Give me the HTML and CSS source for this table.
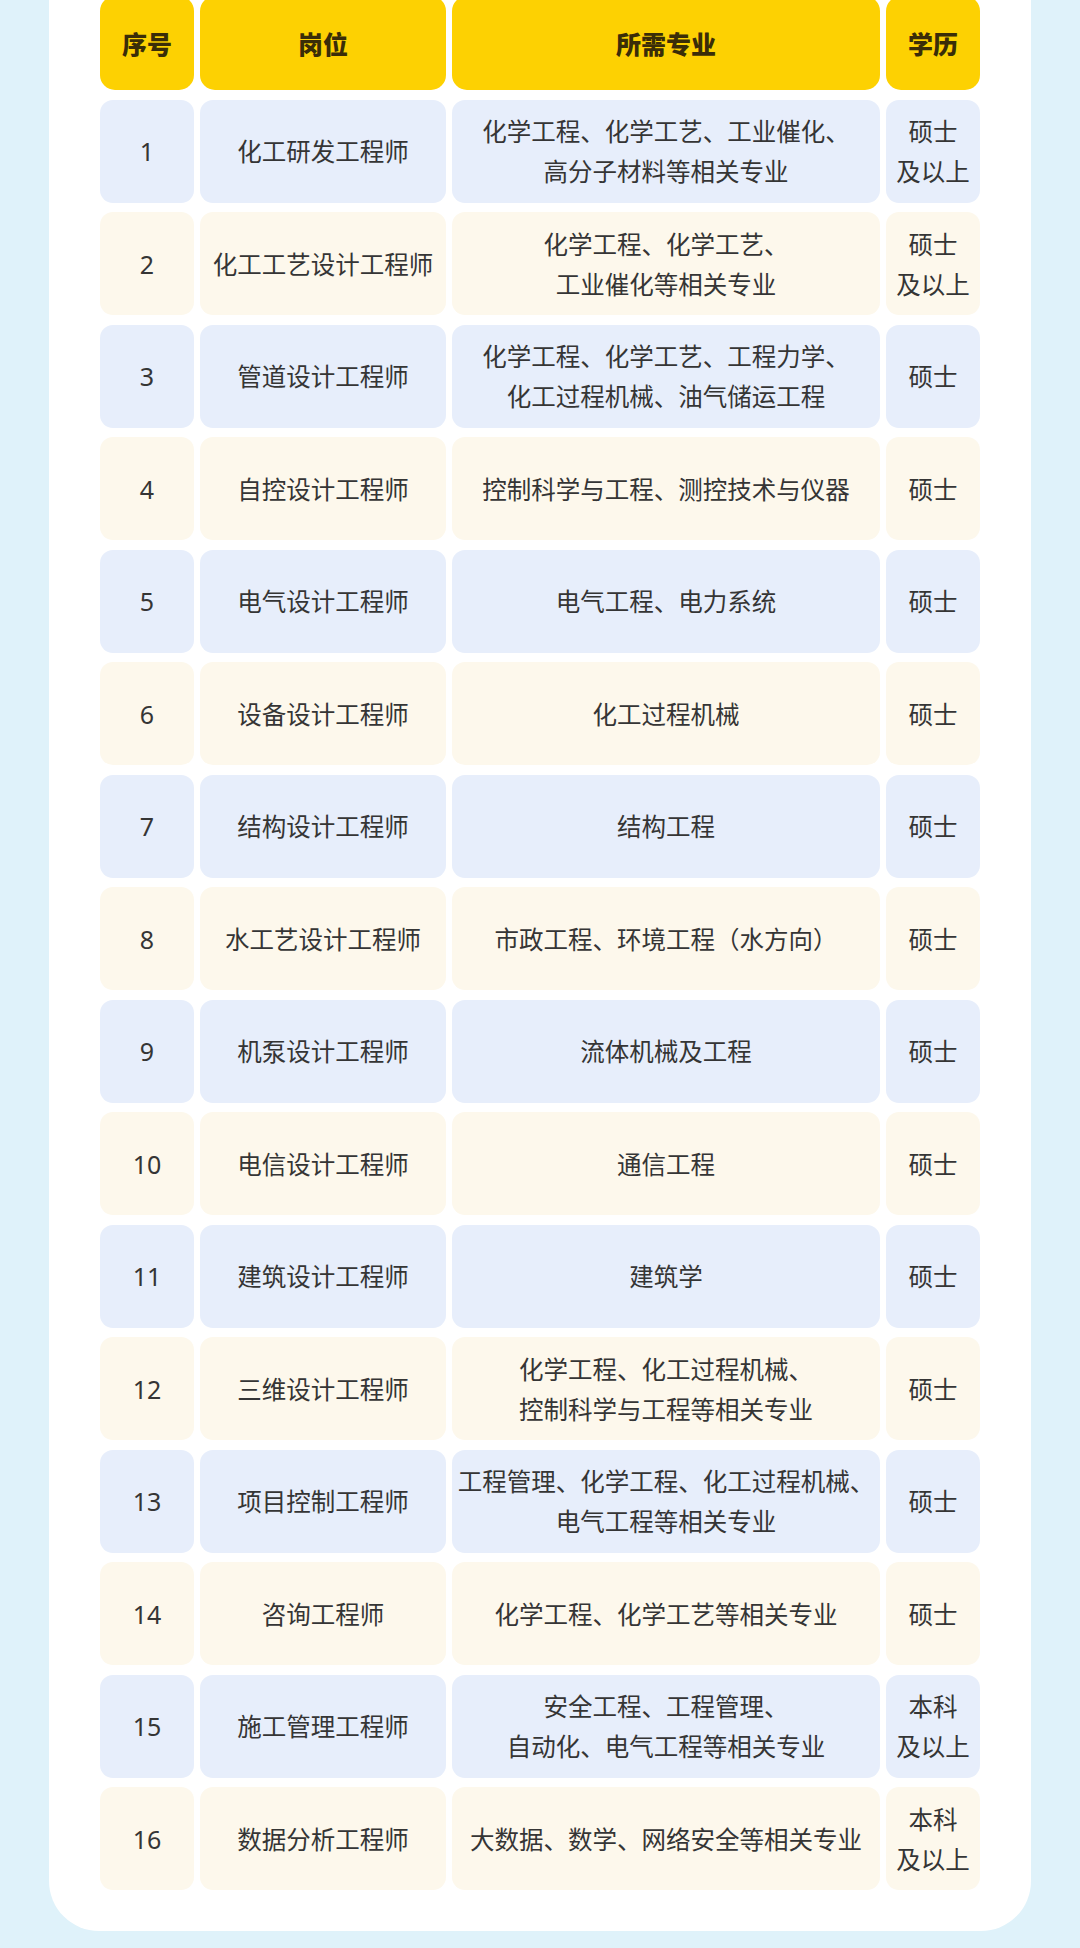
FILE: index.html
```html
<!DOCTYPE html>
<html lang="zh-CN">
<head>
<meta charset="utf-8">
<title>招聘岗位</title>
<link rel="stylesheet" href="styles.css">
</head>
<body>
<div class="page">
  <div class="card">
    <div class="table">
      <div class="cell head">序号</div>
      <div class="cell head">岗位</div>
      <div class="cell head">所需专业</div>
      <div class="cell head">学历</div>

      <div class="cell blue num">1</div>
      <div class="cell blue">化工研发工程师</div>
      <div class="cell blue">化学工程、化学工艺、工业催化、<br>高分子材料等相关专业</div>
      <div class="cell blue">硕士<br>及以上</div>

      <div class="cell cream num">2</div>
      <div class="cell cream">化工工艺设计工程师</div>
      <div class="cell cream">化学工程、化学工艺、<br>工业催化等相关专业</div>
      <div class="cell cream">硕士<br>及以上</div>

      <div class="cell blue num">3</div>
      <div class="cell blue">管道设计工程师</div>
      <div class="cell blue">化学工程、化学工艺、工程力学、<br>化工过程机械、油气储运工程</div>
      <div class="cell blue">硕士</div>

      <div class="cell cream num">4</div>
      <div class="cell cream">自控设计工程师</div>
      <div class="cell cream">控制科学与工程、测控技术与仪器</div>
      <div class="cell cream">硕士</div>

      <div class="cell blue num">5</div>
      <div class="cell blue">电气设计工程师</div>
      <div class="cell blue">电气工程、电力系统</div>
      <div class="cell blue">硕士</div>

      <div class="cell cream num">6</div>
      <div class="cell cream">设备设计工程师</div>
      <div class="cell cream">化工过程机械</div>
      <div class="cell cream">硕士</div>

      <div class="cell blue num">7</div>
      <div class="cell blue">结构设计工程师</div>
      <div class="cell blue">结构工程</div>
      <div class="cell blue">硕士</div>

      <div class="cell cream num">8</div>
      <div class="cell cream">水工艺设计工程师</div>
      <div class="cell cream">市政工程、环境工程（水方向）</div>
      <div class="cell cream">硕士</div>

      <div class="cell blue num">9</div>
      <div class="cell blue">机泵设计工程师</div>
      <div class="cell blue">流体机械及工程</div>
      <div class="cell blue">硕士</div>

      <div class="cell cream num">10</div>
      <div class="cell cream">电信设计工程师</div>
      <div class="cell cream">通信工程</div>
      <div class="cell cream">硕士</div>

      <div class="cell blue num">11</div>
      <div class="cell blue">建筑设计工程师</div>
      <div class="cell blue">建筑学</div>
      <div class="cell blue">硕士</div>

      <div class="cell cream num">12</div>
      <div class="cell cream">三维设计工程师</div>
      <div class="cell cream">化学工程、化工过程机械、<br>控制科学与工程等相关专业</div>
      <div class="cell cream">硕士</div>

      <div class="cell blue num">13</div>
      <div class="cell blue">项目控制工程师</div>
      <div class="cell blue">工程管理、化学工程、化工过程机械、<br>电气工程等相关专业</div>
      <div class="cell blue">硕士</div>

      <div class="cell cream num">14</div>
      <div class="cell cream">咨询工程师</div>
      <div class="cell cream">化学工程、化学工艺等相关专业</div>
      <div class="cell cream">硕士</div>

      <div class="cell blue num">15</div>
      <div class="cell blue">施工管理工程师</div>
      <div class="cell blue">安全工程、工程管理、<br>自动化、电气工程等相关专业</div>
      <div class="cell blue">本科<br>及以上</div>

      <div class="cell cream num">16</div>
      <div class="cell cream">数据分析工程师</div>
      <div class="cell cream">大数据、数学、网络安全等相关专业</div>
      <div class="cell cream">本科<br>及以上</div>
    </div>
  </div>
</div>
</body>
</html>
```

FILE: styles.css
```css
html, body {
  margin: 0;
  padding: 0;
  background: #dff2fa;
}

body {
  width: 1080px;
  height: 1948px;
  overflow: hidden;
  font-family: "Noto Sans CJK SC", "Noto Sans", sans-serif;
  color: #333333;
}

.page {
  padding: 0 49px 0 49px;
}

.card {
  background: #ffffff;
  margin-top: -40px;
  padding: 27px 51px 41px 51px;
  border-radius: 0 0 50px 50px;
}

.table {
  display: grid;
  grid-template-columns: 94px 246px 428px 94px;
  grid-auto-rows: 103px;
  column-gap: 6px;
  row-gap: 9.5px;
}

.cell {
  display: flex;
  align-items: center;
  justify-content: center;
  text-align: center;
  border-radius: 13px;
  font-size: 24.5px;
  line-height: 40px;
  color: #353535;
}

.head {
  background: #fdd102;
  color: #3a2d08;
  font-weight: 900;
  font-size: 25px;
  border-radius: 15px;
  height: 94px;
  align-self: end;
}

.blue {
  background: #e7eefb;
}

.cream {
  background: #fdf8ec;
}

.num {
  font-family: "Noto Sans", "Noto Sans CJK SC", sans-serif;
  font-size: 25px;
}
```
